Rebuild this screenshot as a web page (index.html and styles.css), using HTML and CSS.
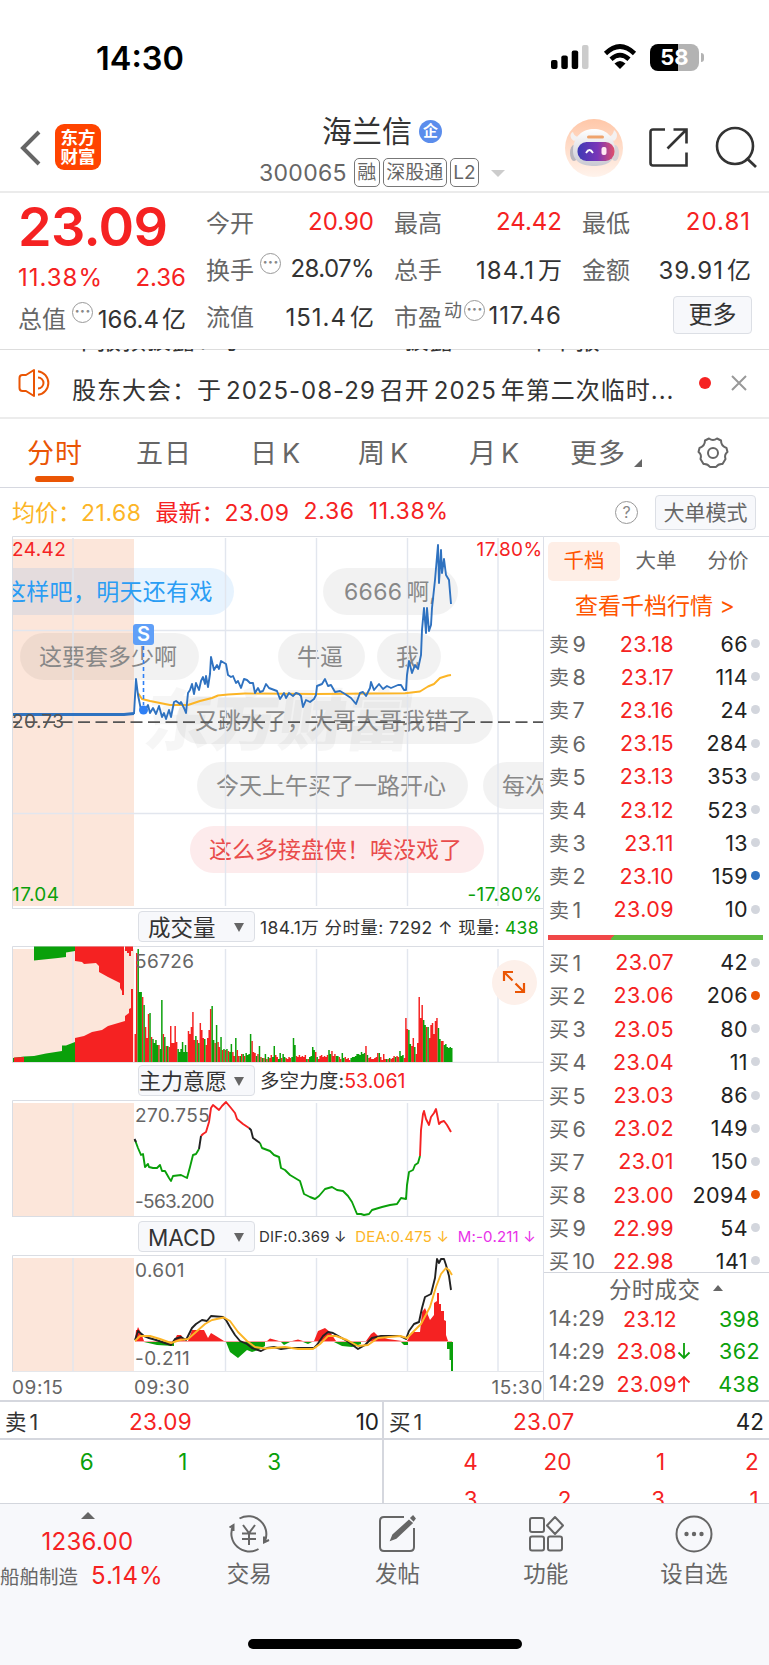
FILE: index.html
```
<!DOCTYPE html>
<html lang="zh-CN">
<head>
    <meta charset="UTF-8">
    <meta name="viewport" content="width=device-width, initial-scale=1.0">
    <title>海兰信 300065</title>
    <link rel="stylesheet" href="styles.css">
</head>
<body>

<div class="statusbar">
    <span class="clock">14:30</span>
    <svg class="signal" width="39" height="26" viewBox="0 0 39 26">
        <rect x="0" y="16" width="6.5" height="9" rx="2"/>
        <rect x="10.3" y="11.500" width="6.500" height="13.500" rx="2"/>
        <rect x="20.700" y="6.500" width="6.500" height="18.500" rx="2"/>
        <rect x="31" y="1" width="6.500" height="24" rx="2" fill="#ccc"/>
    </svg>
    <svg class="wifi" width="34" height="26" viewBox="0 0 34 26">
        <path d="M2.500 9.500Q17 -4.500 31.500 9.500M8 15.200Q17 7 26 15.200" fill="none" stroke="#000" stroke-width="4.600"/>
        <path d="M11.500 19.500Q17 14.500 22.500 19.500L17 25Z"/>
    </svg>
    <div class="battery">58</div>
</div>

<div class="header">
    <svg class="back" width="24" height="38" viewBox="0 0 24 38"><path d="M19 3L3 19L19 35" fill="none" stroke="#666" stroke-width="4"/></svg>
    <div class="logo">东方<br>财富</div>
    <div class="title">
        <div class="name">海兰信<span class="ent">企</span></div>
        <div class="code">300065<span class="tag">融</span><span class="tag">深股通</span><span class="tag">L2</span><i class="down"></i></div>
    </div>
    <svg class="robot" width="58" height="58" viewBox="0 0 58 58">
        <defs>
            <linearGradient id="halo" x1="0" y1="0" x2="0" y2="1"><stop offset="0" stop-color="#ffc7a8"/><stop offset="1" stop-color="#fff3ec"/></linearGradient>
            <linearGradient id="visor" x1="0" y1="0" x2="1" y2="0"><stop offset="0" stop-color="#3d3bb5"/><stop offset=".55" stop-color="#7a35b8"/><stop offset="1" stop-color="#e0506a"/></linearGradient>
            <linearGradient id="shell" x1="0" y1="0" x2="0" y2="1"><stop offset="0" stop-color="#fff"/><stop offset="1" stop-color="#c9c9d2"/></linearGradient>
        </defs>
        <circle cx="29" cy="29" r="29" fill="url(#halo)"/>
        <path d="M9 22C4 19 5 14 8 13C9 17 12 18 15 18ZM49 22C54 18 52 13 49 11C48 16 46 17 43 18Z" fill="#f4f1f1"/>
        <ellipse cx="9" cy="34" rx="4" ry="8" fill="#b9b6bd"/><ellipse cx="50" cy="34" rx="4" ry="8" fill="#d8d3d6"/>
        <path d="M8 32C8 17 18 10 29 10S50 17 50 32C50 43 40 47 29 47S8 43 8 32Z" fill="url(#shell)"/>
        <rect x="12.500" y="23" width="37" height="19" rx="9" fill="url(#visor)"/>
        <rect x="22" y="16.500" width="17" height="3" rx="1.500" fill="#efa36c"/>
        <path d="M21 34Q24.500 28 28 34" fill="none" stroke="#fff" stroke-width="1.800"/>
        <rect x="36.500" y="28" width="5" height="8" rx="2" fill="#ffe9f2"/>
    </svg>
    <svg class="share" width="42" height="42" viewBox="0 0 42 42">
        <path d="M17 2.500H5Q2.500 2.500 2.500 5V36Q2.500 38.500 5 38.500H38.500V25.500M25.500 2.500H38.500V16.500M38 3L19.500 21.500" fill="none" stroke="#333" stroke-width="2.600"/>
    </svg>
    <svg class="search" width="44" height="44" viewBox="0 0 44 44">
        <circle cx="21" cy="20" r="18" fill="none" stroke="#333" stroke-width="2.600"/><path d="M32.500 32L42 41" stroke="#333" stroke-width="2.800"/>
    </svg>
</div>

<div class="quote">
    <div class="main-price">
        <b>23.09</b>
        <p class="red"><span class="wide">11.38%</span><span>2.36</span></p>
        <p><label>总值</label><i class="dots">···</i><span>166.4<em>亿</em></span></p>
    </div>
    <div class="col">
        <p><label>今开</label><span class="red">20.90</span></p>
        <p><label>换手</label><i class="dots">···</i><span class="narrow">28.07%</span></p>
        <p><label>流值</label><span class="wide">151.4<em>亿</em></span></p>
    </div>
    <div class="col">
        <p><label>最高</label><span class="red">24.42</span></p>
        <p><label>总手</label><span class="wide">184.1<em>万</em></span></p>
        <p><label>市盈<sup>动</sup></label><i class="dots">···</i><span class="wide">117.46</span></p>
    </div>
    <div class="col last">
        <p><label>最低</label><span class="red wide">20.81</span></p>
        <p><label>金额</label><span class="wide">39.91<em>亿</em></span></p>
        <button class="more">更多</button>
    </div>
</div>

<div class="news">
    <div class="prev"><div>中报预披露：于<u>2025-08-28</u>披露<u>2025</u>年中报</div></div>
    <svg class="horn" width="36" height="30" viewBox="0 0 36 30">
        <path d="M9 7L17 2V28L9 23H5.500Q2.500 23 2.500 20V10Q2.500 7 5.500 7Z" fill="none" stroke="#ea5504" stroke-width="2" stroke-linejoin="round"/>
        <path d="M21 9.500A5.500 5.500 0 0 1 21 20.500M21 3.200A11.900 11.900 0 0 1 21 26.800" fill="none" stroke="#ea5504" stroke-width="2"/>
    </svg>
    <div class="text">股东大会：于<u>2025-08-29</u>召开<u>2025</u>年第二次临时...</div>
    <i class="reddot"></i>
    <svg class="close" width="18" height="18" viewBox="0 0 18 18"><path d="M2 2L16 16M16 2L2 16" stroke="#999" stroke-width="2"/></svg>
</div>

<div class="tabs">
    <span class="on">分时</span><span>五日</span><span>日<u>K</u></span><span>周<u>K</u></span><span>月<u>K</u></span><span>更多<i></i></span>
    <svg class="gear" width="34" height="34" viewBox="0 0 34 34">
        <path d="M13 2.500Q17 5.500 21 2.500L25 4.500Q25 10 30.500 12L31.500 16Q28 18.500 29.500 23L26.500 28Q22.500 27.500 20 31H14Q11.500 27.500 7.500 28L4.500 23Q6 18.500 2.500 16L3.500 12Q9 10 9 4.500Z" fill="none" stroke="#666" stroke-width="2" stroke-linejoin="round"/>
        <circle cx="17" cy="17" r="5" fill="none" stroke="#666" stroke-width="2"/>
    </svg>
</div>

<div class="avgbar">
    <span class="avg">均价：<u>21.68</u></span>
    <span class="red">最新：<u>23.09</u></span><span class="red">2.36</span><span class="red">11.38%</span>
    <i class="help">?</i>
    <button>大单模式</button>
</div>

<div class="content">
    <div class="charts">
        <div class="chart price">
            <div class="watermark">东方财富</div>
            <span class="dm blue" style="left:-9px;top:32px">这样吧，明天还有戏</span>
            <span class="dm" style="left:311px;top:32px"><u>6666</u>啊,</span>
            <span class="dm" style="left:8px;top:97px">这要套多少啊</span>
            <span class="dm" style="left:266px;top:97px">牛逼</span>
            <span class="dm" style="left:365px;top:97px">我</span>
            <span class="dm" style="left:164px;top:161px">又跳水了，大哥大哥我错了</span>
            <span class="dm" style="left:185px;top:226px">今天上午买了一路开心</span>
            <span class="dm" style="left:471px;top:226px">每次都</span>
            <span class="dm pink" style="left:178px;top:290px">这么多接盘侠！唉没戏了</span>
            <svg width="532" height="373" viewBox="12 536 532 373">
                <path class="grid" d="M73 538V906M225.500 538V906M316.500 538V906M407.500 538V906M498 538V906M12 630.500H543M12 813.500H543"/>
                <path class="frame" d="M12.500 909V536.500H544M12 908.500H544"/>
                <path d="M13 722.200H543" stroke="#555" stroke-width="1.800" stroke-dasharray="12 5.500" stroke-dashoffset="5"/>
                <polyline class="yellow" points="138,693 142,699 150,701 160,703 170,705 188,705 200,701 212,698 218,695.500 228,694.500 245,693.500 316,694 405,693.300 420,691.500 428,686.500 434,684 440,678 448,675.500 451,675"/>
                <path d="M13 714.500H124L134 713.500" fill="none" stroke="#2f72c0" stroke-width="3.200"/>
                <polyline class="blueline" points="134,714 136,679 138,695 141,710 144,712 148,705 150,713 153,708 156,714 159,706 162,717 164,713 166,719 169,710 171,717 174,702 176,701 180,704 181,702 184,708 186,713 188,693 190,690 192,684 194,694 196,683 199,690 201,681 203,677 205,684 206,676 208,687 210,674 211,657 214,670 217,665 219,669 221,661 226,664 228,675 231,677 233,676 236,683 238,681 241,688 244,679 247,680 250,683 253,683 255,693 258,688 260,692 263,691 266,684 269,688 277,691 280,699 284,693 286,698 289,693 293,696 296,693 299,694 301,696 303,707 306,700 310,702 314,699 316,695 317,686 322,684 325,679 328,686 331,685 335,692 340,691 345,694 351,698 356,704 360,693 363,692 366,696 370,688 371,682 374,690 379,684 383,689 387,686 391,688 398,685 401,685 404,690 406,690 407,675 409,661 412,673 415,665 418,669 421,655 422,630 424,608 426,633 427,608 429,631 431,625 432,608 435,580 438,545 439,583 441,550 442,573 444,559 446,575 449,580 451,604"/>
                <path d="M143.500 646V705" stroke="#2f80f5" stroke-width="1.600" stroke-dasharray="4 3"/>
                <circle cx="143.500" cy="710" r="4.500" fill="#2f80f5"/>
                <text x="12" y="556" fill="#f52222">24.42</text>
                <text x="542.500" y="556" text-anchor="end" fill="#f52222">17.80%</text>
                <text x="12" y="728" fill="#555">20.73</text>
                <text x="12" y="901" fill="#0aa00a">17.04</text>
                <text x="542.500" y="901" text-anchor="end" fill="#0aa00a">-17.80%</text>
            </svg>
            <span class="sell">S</span>
        </div>

        <div class="indicator">
            <div class="select">成交量<i></i></div>
            <span class="vol-info">184.1万 分时量: 7292 ↑ 现量: <u class="green">438</u></span>
        </div>
        <div class="chart">
            <svg id="volume" width="532" height="117" viewBox="12 946 532 117">
                <path class="grid" d="M73 949V1062M225.500 949V1062M316.500 949V1062M407.500 949V1062M498 949V1062"/>
                <path class="frame" d="M12.500 1062V946.500H544M12 1062.300H544"/>
                <path fill="#0aa00a" d="M34 946.500H75V951L66 952.500V957L58 958L34 960.500Z"/>
                <path fill="#f52222" d="M75 946.500H124V995H122V991L120 988V983L116 981L108 977L99 972V966L96 963L84 964L82 962L75 961ZM125 946.500H133V951H131V956H129V953H127V951H125Z"/>
                <path fill="#0aa00a" d="M13 1058L24 1056.500L34 1056L46 1053.500L62 1051V1045.500H66L75 1042V1062H13Z"/>
                <path fill="#f52222" d="M14 1057.500L24 1057V1062H14ZM75 1038L84 1036L92 1032L102 1030L108 1026L125 1021V1016L129 1013V1009L131 1008V989H133V1062H75Z"/>
                <text x="135" y="968" fill="#666">56726</text>
            </svg>
            <span class="expand"><svg width="24" height="24" viewBox="0 0 24 24"><path d="M2 11V2H11M2 2L10.500 10.500M22 13V22H13M22 22L13.500 13.500" fill="none" stroke="#ea5504" stroke-width="2.200"/></svg></span>
        </div>

        <div class="indicator">
            <div class="select tight">主力意愿<i></i></div>
            <span class="force-info">多空力度:<u class="red">53.061</u></span>
        </div>
        <div class="chart">
            <svg width="532" height="117" viewBox="12 1100 532 117">
                <path class="grid" d="M73 1103V1216M225.500 1103V1216M316.500 1103V1216M407.500 1103V1216M498 1103V1216"/>
                <path class="frame" d="M12.500 1216V1100.500H544M12 1216.500H544"/>
                <text x="135" y="1122" fill="#666">270.755</text>
                <text x="135" y="1208" fill="#666" textLength="80">-563.200</text>
                <polyline class="g" points="135,1140 138,1148 141,1155 143,1154 145,1167 148,1164 149,1167 153,1168 157,1168 160,1165 162,1171 165,1171 169,1178 171,1181 173,1176 181,1175 187,1178 190,1167 193,1155 196,1154 199,1149"/>
                <polyline class="g" points="260,1143 262,1148 270,1151 274,1155 279,1157 281,1168 285,1170 290,1175 300,1181 304,1194 310,1197 315,1199 319,1196 325,1189 332,1187 337,1190 343,1191 348,1196 352,1202 357,1214 361,1214 364,1215 369,1214 372,1210 382,1207 390,1205 397,1204 401,1198 406,1199 407,1185 409,1172 413,1170 415,1165 418,1163 420,1156"/>
                <polyline class="r" points="201,1136 203,1134 206,1132 209,1122 211,1108 213,1105 219,1110 222,1106 226,1102 231,1108 235,1113 237,1119 243,1124 249,1128"/>
                <polyline class="r" points="420,1156 421,1130 423,1114 424,1111 426,1119 429,1125 431,1117 434,1113 436,1109 439,1124 441,1122 444,1121 447,1125 451,1132"/>
                <path class="k" d="M134.500 1139L136 1142M199 1149L201 1136M249 1128L251 1130L253 1138L260 1143"/>
            </svg>
        </div>

        <div class="indicator macd">
            <div class="select">MACD<i></i></div>
            <span class="macd-info"><u>DIF:0.369 ↓</u><u class="dea">DEA:0.475 ↓</u><u class="m">M:-0.211 ↓</u></span>
        </div>
        <div class="chart">
            <svg width="532" height="118" viewBox="12 1255 532 118">
                <path class="grid" d="M73 1258V1371M225.500 1258V1371M316.500 1258V1371M407.500 1258V1371M498 1258V1371"/>
                <path class="frame" d="M12.500 1372V1255.500H544M12 1371.800H544"/>
                <path d="M135 1341.500H452" stroke="#f9a0a0"/>
                <path fill="#f52222" d="M135 1341L136 1330H137L138 1327L141 1333L144 1341ZM174 1341L177 1335H181L185 1341ZM188 1341L192 1330H204L208 1338L211 1333L216 1336L224 1341ZM267 1341L270 1338.500L279 1341ZM292 1341L298 1339.500L303 1341ZM314 1341L318 1331L325 1328L330 1332L336 1341ZM366 1341L371 1334L374 1332L378 1336L388 1339L402 1341ZM407 1341L412 1332H420L422 1312L425 1308L430 1320L434 1315V1303L437 1301V1293H439V1304H441V1311H444V1320L446 1321V1335L448 1341Z"/>
                <path fill="#0aa00a" d="M144 1342L157 1345L174 1346V1342ZM226 1342L230 1352L238 1358L247 1350L252 1352L258 1350L265 1346V1342ZM281 1342L284 1345L290 1342ZM303 1342L308 1344L312 1342ZM334 1342L342 1346L352 1347L361 1344V1342ZM401 1342L404 1345H408V1342ZM447 1342H453V1371H451V1360H449.500V1349H447Z"/>
                <text x="135" y="1277" fill="#666">0.601</text>
                <text x="135" y="1365" fill="#666">-0.211</text>
                <polyline class="k" points="135,1340 138,1331 144,1336 149,1338 156,1340 165,1343 171,1345 175,1339 181,1337 186,1340 192,1328 196,1324 202,1320 207,1321 211,1316 223,1317 226,1320 230,1327 235,1335 240,1341 247,1344 252,1348 261,1351 267,1348 274,1347 281,1349 288,1348 298,1348 314,1348 317,1345 323,1336 328,1332 333,1333 340,1337 347,1341 358,1349 365,1345 372,1338 381,1336 400,1336 406,1339 409,1331 414,1324 419,1322 422,1308 425,1297 431,1294 435,1278 437,1259 439,1263 441,1259 444,1259 446,1265 449,1276 451,1290"/>
                <polyline class="yellow" points="135,1341 140,1336 150,1336 160,1339 171,1343 180,1340 188,1339 196,1332 205,1324 212,1320 224,1317.500 230,1321 238,1332 247,1341 255,1347 265,1348.500 285,1347 298,1349 313,1349 320,1344 328,1336 336,1336 347,1340 358,1346 368,1345 378,1338 400,1336 407,1338 414,1331 421,1324 430,1307 436,1287 441,1274 446,1268 449,1270 452,1275"/>
            </svg>
        </div>
        <div class="times"><span>09:15</span><span>09:30</span><span>15:30</span></div>
    </div>

    <div class="book">
        <div class="book-tabs"><span class="on">千档</span><span>大单</span><span>分价</span></div>
        <div class="book-link">查看千档行情 &gt;</div>
        <div class="rows">
            <p><label>卖<u>9</u></label><b>23.18</b><span>66</span><i></i></p>
            <p><label>卖<u>8</u></label><b>23.17</b><span>114</span><i></i></p>
            <p><label>卖<u>7</u></label><b>23.16</b><span>24</span><i></i></p>
            <p><label>卖<u>6</u></label><b>23.15</b><span>284</span><i></i></p>
            <p><label>卖<u>5</u></label><b>23.13</b><span>353</span><i></i></p>
            <p><label>卖<u>4</u></label><b>23.12</b><span>523</span><i></i></p>
            <p><label>卖<u>3</u></label><b>23.11</b><span>13</span><i></i></p>
            <p><label>卖<u>2</u></label><b>23.10</b><span>159</span><i class="dot-blue"></i></p>
            <p><label>卖<u>1</u></label><b>23.09</b><span>10</span><i></i></p>
        </div>
        <div class="ratio"></div>
        <div class="rows buy">
            <p><label>买<u>1</u></label><b>23.07</b><span>42</span><i></i></p>
            <p><label>买<u>2</u></label><b>23.06</b><span>206</span><i class="dot-orange"></i></p>
            <p><label>买<u>3</u></label><b>23.05</b><span>80</span><i></i></p>
            <p><label>买<u>4</u></label><b>23.04</b><span>11</span><i></i></p>
            <p><label>买<u>5</u></label><b>23.03</b><span>86</span><i></i></p>
            <p><label>买<u>6</u></label><b>23.02</b><span>149</span><i></i></p>
            <p><label>买<u>7</u></label><b>23.01</b><span>150</span><i></i></p>
            <p><label>买<u>8</u></label><b>23.00</b><span>2094</span><i class="dot-orange"></i></p>
            <p><label>买<u>9</u></label><b>22.99</b><span>54</span><i></i></p>
            <p><label>买<u>10</u></label><b>22.98</b><span>141</span><i></i></p>
        </div>
        <div class="deal-title">分时成交<i></i></div>
        <div class="deals">
            <p><label>14:29</label><b>23.12</b><em></em><span>398</span></p>
            <p><label>14:29</label><b>23.08</b><em><svg width="14" height="18" viewBox="0 0 14 18"><path d="M7 1V16M1.500 10.500L7 16L12.500 10.500" fill="none" stroke="#0aa00a" stroke-width="1.800"/></svg></em><span>362</span></p>
            <p><label>14:29</label><b>23.09</b><em><svg width="14" height="18" viewBox="0 0 14 18"><path d="M7 17V2M1.500 7.500L7 2L12.500 7.500" fill="none" stroke="#f52222" stroke-width="1.800"/></svg></em><span>438</span></p>
        </div>
    </div>
</div>

<div class="queue">
    <div class="side">
        <div class="queue-head"><label>卖<u>1</u></label><b>23.09</b><span>10</span></div>
        <div class="queue-list green"><span>6</span><span>1</span><span>3</span></div>
    </div>
    <div class="side">
        <div class="queue-head"><label>买<u>1</u></label><b>23.07</b><span>42</span></div>
        <div class="queue-list red"><span>4</span><span>20</span><span>1</span><span>2</span><span>3</span><span>2</span><span>3</span><span>1</span></div>
    </div>
</div>

<div class="bottom">
    <div class="sector">
        <i></i>
        <b>1236.00</b>
        <p>船舶制造<span>5.14%</span></p>
    </div>
    <div class="item">
        <svg width="44" height="40" viewBox="0 0 44 40">
            <path d="M12.500 4.500A18 18 0 0 1 38 27M31.500 35A18 18 0 0 1 6 12M2.500 13.500L6.500 11V17M37 22.500V28.500L42 26" fill="none" stroke="#666" stroke-width="2"/>
            <path d="M16 11L22 19L28 11M15 19.500H29M15 25H29M22 19V31" fill="none" stroke="#666" stroke-width="2"/>
        </svg>交易</div>
    <div class="item">
        <svg width="44" height="40" viewBox="0 0 44 40">
            <path d="M29 3H9Q5 3 5 7V33Q5 37 9 37H35Q39 37 39 33V14" fill="none" stroke="#666" stroke-width="2"/>
            <path d="M34 6.500L37 9L21 24L16 26L18 21ZM36 4L38 2L40 4.500L38.500 6.500Z" fill="#666" stroke="#666" stroke-width="1.500"/>
        </svg>发帖</div>
    <div class="item">
        <svg width="44" height="40" viewBox="0 0 44 40">
            <g fill="none" stroke="#666" stroke-width="2"><rect x="6" y="4" width="14" height="14" rx="2"/><rect x="6" y="22.500" width="14" height="14" rx="2"/><rect x="24" y="22.500" width="14" height="14" rx="2"/><path d="M31 3L39 11.500L31 20L23 11.500Z" stroke-linejoin="round"/></g>
        </svg>功能</div>
    <div class="item">
        <svg width="44" height="40" viewBox="0 0 44 40">
            <circle cx="22" cy="20" r="17.500" fill="none" stroke="#666" stroke-width="2"/>
            <g fill="#666"><circle cx="14.500" cy="20" r="2.200"/><circle cx="22" cy="20" r="2.200"/><circle cx="29.500" cy="20" r="2.200"/></g>
        </svg>设自选</div>
    <div class="home"></div>
</div>

<script src="script.js"></script>
</body>
</html>
```
FILE: styles.css
```
* {
    box-sizing: border-box;
}
body {
    margin: 0;
    width: 769px;
    height: 1665px;
    overflow: hidden;
    background: #fff;
    color: #333;
    font-family: Inter, "Noto Sans CJK SC", sans-serif;
    font-size: 24px;
}
p {
    margin: 0;
}
i, em {
    font-style: normal;
}
u {
    text-decoration: none;
}
b {
    font-weight: 400;
}
svg {
    display: block;
    flex: none;
}
button {
    font-family: inherit;
    color: #333;
    background: #f7f8fb;
    border: 1px solid #dcdfe5;
    border-radius: 4px;
    padding: 0;
}
.red {
    color: #f52222;
}
.green {
    color: #0aa00a;
}

/* status bar */
.statusbar {
    height: 110px;
    display: flex;
    align-items: flex-start;
    padding: 44px 0 0 96px;
}
.clock {
    width: 455px;
    font-size: 32.5px;
    font-weight: 600;
    line-height: 29px;
    color: #000;
}
.wifi {
    margin-left: 13px;
}
.battery {
    position: relative;
    width: 49px;
    height: 27px;
    margin-left: 13px;
    border-radius: 8px;
    background: linear-gradient(90deg, #000 58%, #b3b3b3 58%);
    color: #fff;
    font-size: 22px;
    font-weight: 700;
    line-height: 27px;
    text-align: center;
}
.battery::after {
    content: "";
    position: absolute;
    left: 51px;
    top: 9px;
    width: 3px;
    height: 9px;
    border-radius: 0 3px 3px 0;
    background: #b3b3b3;
}

/* header */
.header {
    height: 83px;
    display: flex;
    align-items: flex-start;
    padding-left: 20px;
    border-bottom: 2px solid #ebebeb;
}
.back {
    margin-top: 19px;
}
.logo {
    width: 46px;
    height: 46px;
    margin: 14px 0 0 11px;
    padding-top: 4px;
    border-radius: 9px;
    background: #ff4400;
    color: #fff;
    font-size: 17.5px;
    font-weight: 700;
    line-height: 19px;
    text-align: center;
}
.title {
    width: 246px;
    margin-left: 158px;
}
.name {
    display: flex;
    align-items: center;
    height: 42px;
    padding-left: 63px;
    font-size: 30px;
    line-height: 42px;
}
.ent {
    width: 23px;
    height: 23px;
    margin-left: 7px;
    border-radius: 50%;
    background: #5b8dec;
    color: #fff;
    font-size: 15px;
    font-weight: 700;
    line-height: 22px;
    text-align: center;
}
.code {
    display: flex;
    align-items: center;
    height: 41px;
    color: #666;
    font-size: 23px;
    letter-spacing: .3px;
    white-space: nowrap;
}
.tag {
    height: 29px;
    margin-left: 3px;
    padding: 0 2.5px;
    border: 1px solid #777;
    border-radius: 5px;
    font-size: 19px;
    line-height: 27px;
    letter-spacing: 0;
}
.tag:first-child {
    margin-left: 7px;
}
.down {
    margin: 2px 0 0 12px;
    border: 7px solid transparent;
    border-top-color: #ccc;
    border-bottom: 0;
}
.robot {
    margin: 9px 0 0 60px;
}
.share {
    margin: 17px 0 0 25px;
}
.search {
    margin: 16px 0 0 24px;
}

/* quote */
.quote {
    display: flex;
    height: 156px;
    padding-left: 18px;
}
.main-price {
    width: 168px;
}
.main-price > b {
    display: block;
    height: 54px;
    padding-top: 7px;
    color: #f52222;
    font-size: 54px;
    font-weight: 600;
    line-height: 54px;
    letter-spacing: -.7px;
}
.main-price p.red {
    height: 47px;
    margin-top: 7px;
    justify-content: space-between;
}
.main-price p:last-child {
    margin-top: -7px;
}
.quote p {
    display: flex;
    align-items: center;
    height: 47px;
}
.quote p > span {
    margin-left: auto;
    white-space: nowrap;
}
.main-price p.red span {
    margin: 0;
}
.quote label {
    color: #666;
}
.quote em {
    margin-left: 3px;
    letter-spacing: 0;
}
.quote sup {
    font-size: 18px;
    line-height: 10px;
    vertical-align: 9px;
    margin-left: 2px;
}
.quote .wide {
    letter-spacing: 1px;
}
.quote .narrow {
    letter-spacing: -.6px;
}
.col {
    width: 168px;
    margin-left: 20px;
    padding-top: 5px;
}
.col.last {
    width: 169px;
}
.dots {
    flex: none;
    width: 21px;
    height: 21px;
    margin: -10px 0 0 6px;
    border: 1.5px solid #999;
    border-radius: 50%;
    color: #888;
    font-size: 16px;
    font-weight: 700;
    line-height: 17px;
    text-align: center;
}
.col label:has(sup) + .dots {
    margin-left: 2px;
}
.more {
    display: block;
    width: 79px;
    height: 38px;
    margin: 4px -1px 0 auto;
    font-size: 24px;
    line-height: 36px;
}

/* news ticker */
.news {
    position: relative;
    height: 70px;
    display: flex;
    align-items: flex-start;
    padding-left: 17px;
    border-top: 1px solid #ddd;
    border-bottom: 2px solid #ececec;
    letter-spacing: 1px;
    white-space: nowrap;
}
.prev {
    position: absolute;
    left: 72px;
    top: -1px;
    height: 3px;
    overflow: hidden;
}
.prev div {
    height: 24px;
    margin-top: -20px;
    line-height: 24px;
}
.news u {
    margin: 0 4px;
}
.horn {
    margin-top: 18px;
}
.text {
    width: 604px;
    margin-left: 19px;
    line-height: 81px;
    height: 67px;
}
.reddot {
    width: 12px;
    height: 12px;
    margin-top: 27px;
    margin-left: 23px;
    border-radius: 50%;
    background: #f52222;
}
.close {
    margin: 24px 0 0 19px;
}

/* period tabs */
.tabs {
    display: flex;
    height: 69px;
    padding-left: 27px;
    border-bottom: 1.5px solid #d6d8e0;
    color: #666;
    font-size: 27px;
    letter-spacing: 1px;
    line-height: 70px;
    white-space: nowrap;
}
.tabs span {
    position: relative;
    width: 109px;
}
.tabs span:nth-child(2) {
    width: 114px;
}
.tabs span:nth-child(3) {
    width: 108px;
}
.tabs span:nth-child(4) {
    width: 111px;
}
.tabs span:nth-child(5) {
    width: 101px;
}
.tabs span:nth-child(6) {
    width: 126px;
}
.tabs u {
    margin-left: 4px;
}
.tabs .on {
    color: #ea5504;
}
.tabs .on::after {
    content: "";
    position: absolute;
    left: 8px;
    top: 57px;
    width: 39px;
    height: 6px;
    border-radius: 3px;
    background: #ea5504;
}
.tabs i {
    display: inline-block;
    margin-left: 8px;
    border-left: 8px solid transparent;
    border-bottom: 8px solid #666;
    vertical-align: -4px;
}
.gear {
    margin-top: 17px;
}

/* average price bar */
.avgbar {
    display: flex;
    align-items: center;
    height: 48px;
    padding-left: 12px;
    font-size: 23px;
    white-space: nowrap;
}
.avgbar span {
    margin: -2px 14px 0 0;
}
.avgbar u {
    letter-spacing: .5px;
}
.avgbar span:nth-child(n+3) {
    letter-spacing: .7px;
}
.avg {
    color: #fcb526;
}
.help {
    width: 23px;
    height: 23px;
    margin-left: auto;
    border: 1.5px solid #999;
    border-radius: 50%;
    color: #888;
    font-size: 16px;
    line-height: 20px;
    text-align: center;
}
.avgbar button {
    width: 101px;
    height: 35px;
    margin: 0 13px 0 17px;
    color: #666;
    font-size: 21px;
    line-height: 31px;
}

/* charts */
.content {
    display: flex;
    height: 866px;
    border-bottom: 2px solid #d5d7de;
}
.charts {
    width: 544px;
    padding-left: 12px;
    border-right: 1px solid #dcdfe8;
}
.chart {
    position: relative;
    width: 531px;
    height: 117px;
    overflow: hidden;
    background: linear-gradient(#fce6da, #fce6da) no-repeat 1px 3px / 121px 113px;
}
.chart.price {
    height: 373px;
    background-size: 121px 367px;
}
.chart > svg {
    position: relative;
}
.chart text {
    font-size: 19px;
    letter-spacing: .4px;
}
.grid {
    fill: none;
    stroke: #e2e6ee;
    stroke-width: 1.4;
}
.frame {
    fill: none;
    stroke: #dadde3;
}
.yellow, .blueline, .g, .r, .k {
    fill: none;
    stroke-width: 1.9;
    stroke-linejoin: round;
}
.yellow {
    stroke: #fcb526;
}
.blueline {
    stroke: #2f72c0;
}
.g {
    stroke: #0aa00a;
}
.r {
    stroke: #f52222;
}
.k {
    stroke: #222;
}
.watermark {
    position: absolute;
    left: 133px;
    top: 150px;
    color: rgba(0, 0, 0, .035);
    font-size: 67px;
    font-weight: 900;
    line-height: 70px;
    transform: skewX(-8deg);
}
.dm {
    position: absolute;
    height: 47px;
    padding: 0 22px 0 19px;
    border-radius: 24px;
    background: rgba(0, 0, 0, .05);
    color: #888;
    font-size: 23px;
    line-height: 48px;
    white-space: nowrap;
}
.dm u {
    margin: 0 4px 0 2px;
    letter-spacing: .3px;
}
.dm.blue {
    padding: 0 21px 0 0;
    border-radius: 0 24px 24px 0;
    background: rgba(33, 150, 243, .11);
    color: #2a9df4;
    letter-spacing: .3px;
}
.dm.pink {
    background: #fdebec;
    color: #e94b4b;
}
.sell {
    position: absolute;
    left: 121px;
    top: 88px;
    width: 21px;
    height: 21px;
    border-radius: 3px;
    background: #5f9ff8;
    color: #fff;
    font-size: 20px;
    font-weight: 600;
    line-height: 21px;
    text-align: center;
}
.indicator {
    display: flex;
    align-items: flex-start;
    height: 37px;
    padding: 2px 0 0 126px;
    white-space: nowrap;
    line-height: 33px;
}
.select {
    position: relative;
    width: 117px;
    height: 31px;
    padding-left: 9px;
    border: 1px solid #dcdfe5;
    border-radius: 4px;
    background: #f7f8fb;
    font-size: 22.5px;
    line-height: 31px;
}
.select.tight {
    padding-left: 0;
    font-size: 22px;
}
.select i {
    position: absolute;
    right: 10px;
    top: 11px;
    border: 5px solid transparent;
    border-top: 9px solid #666;
    border-bottom: 0;
}
.vol-info {
    margin-left: 5px;
    font-size: 17.5px;
    letter-spacing: .4px;
}
.force-info {
    margin-left: 5px;
    font-size: 19.5px;
    letter-spacing: .1px;
}
.macd {
    height: 38px;
    padding-top: 4px;
    line-height: 31px;
}
.macd-info {
    display: flex;
    width: 277px;
    margin-left: 4px;
    justify-content: space-between;
    font-size: 15px;
    letter-spacing: .2px;
}
.dea {
    color: #fcb526;
}
.m {
    color: #e830e8;
}
.expand {
    position: absolute;
    left: 480px;
    top: 14px;
    width: 45px;
    height: 45px;
    padding: 10px;
    border-radius: 50%;
    background: #fdf0ea;
}
.times {
    display: flex;
    height: 28px;
    color: #666;
    font-size: 19px;
    letter-spacing: .6px;
    line-height: 31px;
}
.times span:first-child {
    width: 122px;
}
.times span:last-child {
    margin-left: auto;
}

/* order book */
.book {
    width: 225px;
}
.book-tabs {
    display: flex;
    height: 50px;
    padding: 5px 0 0 4px;
    border-top: 1px solid #dadde3;
    color: #666;
    font-size: 20.5px;
    line-height: 37px;
    text-align: center;
}
.book-tabs span {
    width: 72px;
    height: 39px;
    border-radius: 5px;
}
.book-tabs .on {
    background: #feeee6;
    color: #ff5500;
}
.book-link {
    height: 41px;
    padding-left: 31px;
    color: #ff5500;
    font-size: 23px;
    line-height: 41px;
    white-space: nowrap;
}
.rows p, .deals p {
    display: flex;
    align-items: center;
    height: 33.2px;
    padding-left: 5px;
    font-size: 21.5px;
    letter-spacing: .4px;
}
.rows label, .deals label {
    width: 54px;
    color: #666;
    white-space: nowrap;
    font-size: 20px;
}
.rows label u {
    margin-left: 3px;
    font-size: 21.5px;
}
.rows b, .deals b {
    width: 71px;
    color: #f52222;
    text-align: right;
}
.rows span {
    width: 74px;
    color: #222;
    text-align: right;
}
.rows i {
    width: 9px;
    height: 9px;
    margin-left: 3px;
    border-radius: 50%;
    background: #d3d6dd;
}
.rows .dot-blue {
    background: #2f72c0;
}
.rows .dot-orange {
    background: #ea5504;
}
.ratio {
    width: 215px;
    height: 5px;
    margin: 9px 0 6px 4px;
    background: linear-gradient(125deg, #f04848 54px, #5cbb40 54px);
}
.rows.buy {
    height: 327px;
    overflow: hidden;
    border-bottom: 1px solid #d3d6dd;
}
.deal-title {
    display: flex;
    align-items: center;
    height: 30px;
    padding-left: 65px;
    color: #666;
    font-size: 22.5px;
    letter-spacing: .3px;
}
.deal-title i {
    margin-left: 13px;
    border: 5px solid transparent;
    border-top: 0;
    border-bottom: 6px solid #666;
}
.deals p {
    height: 32.5px;
}
.deals label {
    width: 57px;
    font-size: 21px;
}
.deals em {
    width: 14px;
}
.deals span {
    width: 69px;
    color: #0aa00a;
    text-align: right;
}

/* queue */
.queue {
    display: flex;
    height: 101px;
    overflow: hidden;
}
.side {
    width: 382px;
}
.side + .side {
    width: 387px;
    border-left: 2px solid #d5d7de;
}
.queue-head {
    display: flex;
    height: 38px;
    padding: 0 3px 0 5px;
    border-bottom: 2px solid #d5d7de;
    font-size: 22.5px;
    line-height: 40px;
}
.queue-head label {
    width: 124px;
    font-size: 21.5px;
}
.queue-head u {
    margin-left: 3px;
}
.queue-head b {
    color: #f52222;
    letter-spacing: .4px;
}
.queue-head span {
    margin-left: auto;
    color: #222;
}
.side + .side .queue-head {
    padding-right: 5px;
}
.queue-list {
    display: grid;
    grid-template-columns: repeat(4, 93.7px);
    grid-auto-rows: 38px;
    font-size: 22.5px;
    line-height: 43px;
    text-align: right;
}

/* bottom bar */
.bottom {
    position: relative;
    display: flex;
    height: 162px;
    border-top: 1px solid #d3d6dd;
    background: #f7f8fb;
    color: #666;
}
.sector {
    width: 175px;
    text-align: center;
    white-space: nowrap;
}
.sector > i {
    display: block;
    width: 14px;
    margin: 8px 0 0 81px;
    border: 7px solid transparent;
    border-top: 0;
    border-bottom-color: #666;
}
.sector b {
    display: block;
    height: 34px;
    margin-top: 5px;
    color: #f52222;
    font-size: 24px;
    line-height: 36px;
    letter-spacing: .3px;
}
.sector p {
    height: 34px;
    font-size: 19.5px;
    line-height: 35px;
    text-align: left;
}
.sector span {
    margin-left: 13px;
    color: #f52222;
    font-size: 24px;
    letter-spacing: 1px;
}
.item {
    width: 148.3px;
    padding-top: 10px;
    font-size: 22.5px;
    line-height: 38px;
    text-align: center;
}
.item svg {
    margin: 0 auto 1px;
}
.home {
    position: absolute;
    left: 248px;
    top: 135px;
    width: 274px;
    height: 10px;
    border-radius: 5px;
    background: #000;
}
```
FILE: script.js
```
// minute volume, positive = red bar, negative = green bar
var volumes = [
    28, 109, -113, -70, -70, 65, -57, 35, 24, 48, -49, 25, -23, -19, -22, -17, 17, -13, -62, 28,
    -25, 16, -16, 15, 36, 19, 19, 36, 20, -13, -10, -13, -20, -10, -17, -10, 31, 28, 35, 50,
    22, -26, 22, -19, 39, 32, 24, -23, 17, 24, 32, 53, -56, -22, 19, -37, 20, 15, -25, 12,
    -13, 12, -13, 11, -10, -18, 10, 6, -24, 12, 6, -6, 8, -8, 6, -9, -7, -8, -28, 21,
    10, 9, -6, 8, -16, 5, -4, 4, -8, 3, -5, 4, 7, -5, -16, 7, 5, -3, -9, 4,
    -8, -5, 4, 3, 5, 4, -5, -24, -17, 6, 5, 7, 5, 6, 5, 7, -3, 3, -5, -6,
    -15, -12, 10, -5, 3, 6, 7, 5, 6, 5, 7, -12, -8, 11, 6, 8, -6, -6, 5, 3,
    -9, -4, 5, 3, 4, 2, -4, -5, -5, -6, -8, -8, -7, -10, -8, -9, 16, -7, 4, 5,
    3, 3, 4, 5, 9, -9, 5, 2, 8, 3, -3, 3, -4, 3, 4, 6, -5, 6, 5, -11,
    -6, -7, 4, 44, 33, -32, -18, 16, 24, -15, 8, 19, 65, 44, 57, -42, -37, 35, -35, 24,
    37, 39, 28, 41, 44, -34, -23, 21, 21, -17, -18, -15, -14, -15, -14
];
var svg = document.getElementById('volume');
var label = svg.querySelector('text');
var step = 318 / volumes.length;

function addBars(color, sign) {
    var d = '';
    volumes.forEach(function(v, i) {
        if (v * sign > 0) {
            var h = Math.abs(v);
            d += 'M' + (134.5 + i * step).toFixed(2) + ' 1062v' + (-h) + 'h' + step.toFixed(2) + 'v' + h + 'z';
        }
    });
    var path = document.createElementNS('http://www.w3.org/2000/svg', 'path');
    path.setAttribute('d', d);
    path.setAttribute('fill', color);
    svg.insertBefore(path, label);
}

addBars('#f52222', 1);
addBars('#0aa00a', -1);
```
